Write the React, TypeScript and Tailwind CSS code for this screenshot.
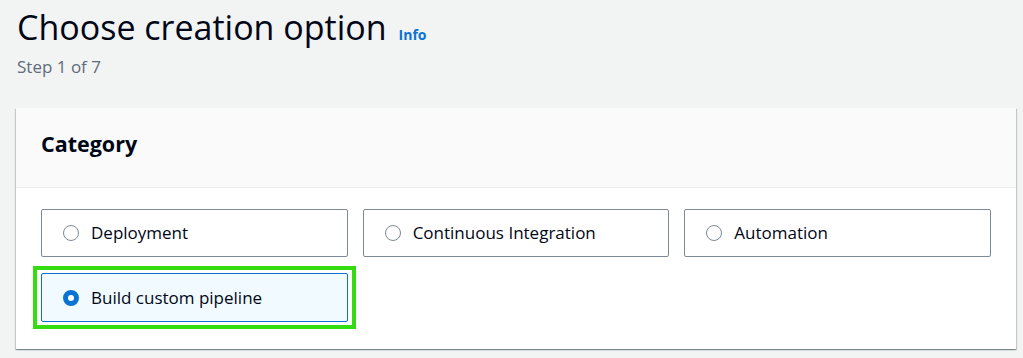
import { FC } from "react";

type Option = { label: string; selected?: boolean };

const options: Option[] = [
  { label: "Deployment" },
  { label: "Continuous Integration" },
  { label: "Automation" },
  { label: "Build custom pipeline", selected: true },
];

const Radio: FC<{ checked?: boolean }> = ({ checked }) =>
  checked ? (
    <span className="block w-[16px] h-[16px] rounded-full border-[5px] border-[#0972d3] bg-white" />
  ) : (
    <span className="block w-[16px] h-[16px] rounded-full border-[1.5px] border-[#7d8998] bg-white" />
  );

const OptionTile: FC<{ option: Option }> = ({ option }) => (
  <div
    className={
      option.selected
        ? "relative flex items-center gap-[12px] h-[49px] pl-[21px] rounded-[2px] border border-[#0972d3] bg-[#f1faff]"
        : "flex items-center gap-[12px] h-[48px] pl-[21px] rounded-[2px] border border-[#7d8998] bg-white"
    }
  >
    <Radio checked={option.selected} />
    <span className="text-[17px] text-[#000716]">{option.label}</span>
    {option.selected && (
      <span className="absolute -inset-x-[9px] -inset-y-[8px] border-[4px] border-[#33dd11] pointer-events-none" />
    )}
  </div>
);

export default function App() {
  return (
    <div
      className="h-[358px] bg-[#f2f3f3] overflow-hidden"
      style={{ fontFamily: '"Open Sans", "Noto Sans", Arial, sans-serif' }}
    >
      <div className="pl-[17px] pt-[5px]">
        <div className="flex items-baseline gap-[12px]">
          <h1 className="text-[34px] leading-[44px] text-[#000716]">Choose creation option</h1>
          <a className="text-[14px] font-bold text-[#0972d3]">Info</a>
        </div>
        <p className="mt-[7px] text-[17px] leading-[22px] text-[#5f6b7a]">Step 1 of 7</p>
      </div>

      <div className="mt-[30px] ml-[16px] w-[1000px] bg-white shadow-[0_1px_1px_0_rgba(0,28,36,0.3),1px_1px_1px_0_rgba(0,28,36,0.15),-1px_1px_1px_0_rgba(0,28,36,0.15)]">
        <div className="h-[80px] flex items-center pb-[6px] px-[25px] bg-[#fafafa] border-b border-[#eaeded]">
          <h2 className="text-[21.5px] font-bold text-[#000716]">Category</h2>
        </div>
        <div className="grid grid-cols-3 gap-x-[15px] gap-y-[16px] px-[25px] pt-[21px] pb-[27px]">
          {options.map((o) => (
            <OptionTile key={o.label} option={o} />
          ))}
        </div>
      </div>
    </div>
  );
}
